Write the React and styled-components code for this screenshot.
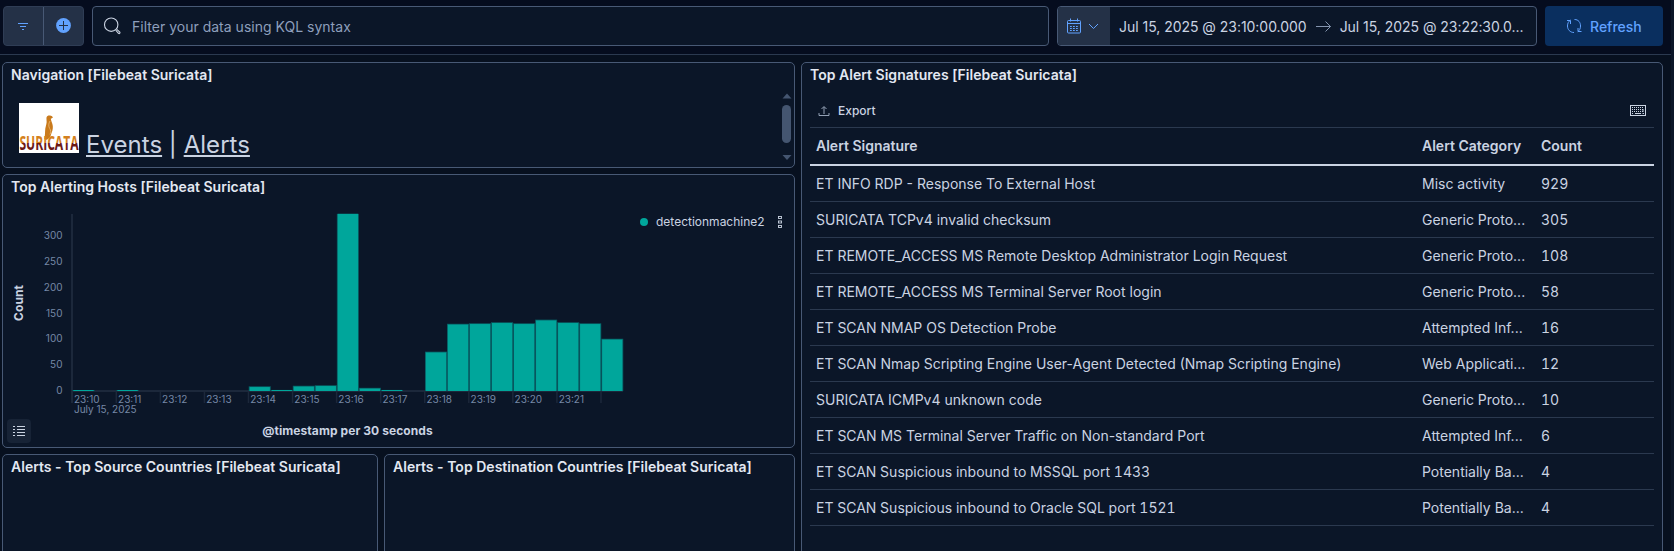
import React from "react";
import styled, { createGlobalStyle, css } from "styled-components";

const c = {
  body: "#07101f",
  panel: "#0b1628",
  border: "#485975",
  line: "#2b394f",
  text: "#cad3e2",
  title: "#e3e8f2",
  subdued: "#8e9fbc",
  axis: "#7688a6",
  primary: "#61a2ff",
  shade: "#243147",
  teal: "#00a69b",
};

const Global = createGlobalStyle`
  html, body { margin: 0; height: 100%; background: ${c.panel}; overflow: hidden; }
  #root { height: 100%; }
  * { box-sizing: border-box; }
  body { font-family: Inter, "Liberation Sans", sans-serif; font-size: 14px; color: ${c.text}; }
  svg { display: block; flex: none; }
`;

const Page = styled.div`
  width: 1671px;
  height: 551px;
  overflow: hidden;
  background: ${c.body};
  display: flex;
  flex-direction: column;
`;

const TopBar = styled.header`
  height: 55px;
  flex: none;
  display: flex;
  gap: 8px;
  padding: 6px 8px 8px 3px;
  border-bottom: 1px solid ${c.line};
  background: #050c1e;
`;

const ButtonGroup = styled.div`
  display: flex;
  width: 81px;
  height: 40px;
  background: ${c.shade};
  border: 1px solid #2f3d55;
  border-radius: 4px;
`;

const GroupButton = styled.button`
  flex: 1;
  padding: 0 1px 0 0;
  border: 0;
  border-left: ${(p) => (p.$divided ? `1px solid ${c.border}` : "0")};
  background: none;
  display: flex;
  align-items: center;
  justify-content: center;
`;

const field = css`
  height: 40px;
  display: flex;
  align-items: center;
  background: ${c.panel};
  border: 1px solid ${c.border};
  border-radius: 4px;
  overflow: hidden;
`;

const SearchField = styled.div`
  ${field}
  width: 957px;
  padding-left: 10px;
  gap: 11px;
  color: ${c.subdued};
`;

const Range = styled.div`
  ${field}
  width: 480px;
  white-space: nowrap;
`;

const QuickSelect = styled.div`
  width: 52px;
  height: 100%;
  background: ${c.shade};
  display: flex;
  align-items: center;
  gap: 7px;
  padding-left: 8px;
`;

const FieldText = styled.span`
  margin-left: ${(p) => p.$gap || 0}px;
  letter-spacing: ${(p) => p.$track || 0}px;
  padding-top: 1px;
`;

const Arrow = styled.span`
  margin-left: 9px;
`;

const Refresh = styled.button`
  width: 118px;
  height: 40px;
  border: 0;
  border-radius: 4px;
  background: #0a2f5f;
  color: ${c.primary};
  font: 500 14px Inter, sans-serif;
  display: flex;
  align-items: center;
  padding: 0 0 0 21px;
  gap: 7px;
`;

const Dashboard = styled.main`
  flex: 1;
  min-height: 0;
  display: flex;
  gap: 6px;
  padding: 7px 8px 0 2px;
`;

const LeftColumn = styled.div`
  width: 793px;
  display: flex;
  flex-direction: column;
  gap: 6px;
`;

const SplitRow = styled.div`
  display: flex;
  gap: 6px;
  height: 120px;
  flex: none;
`;

const Panel = styled.section`
  position: relative;
  flex: ${(p) => (p.$w ? "none" : "1 1 0")};
  width: ${(p) => (p.$w ? `${p.$w}px` : "auto")};
  ${(p) => p.$h && `height: ${p.$h}px; flex: none;`}
  background: ${c.panel};
  border: 1px solid ${c.border};
  border-radius: 5px;
  overflow: hidden;
`;

const Title = styled.h2`
  margin: 0;
  height: 24px;
  padding: 0 8px;
  font-size: 14px;
  line-height: 23px;
  font-weight: 600;
  color: ${c.title};
  letter-spacing: 0.02px;
  white-space: nowrap;
`;

const NavBody = styled.div`
  display: flex;
  justify-content: space-between;
  padding: 6px 2px 0 16px;
`;

const NavLinks = styled.div`
  display: flex;
  align-items: flex-start;
  padding-top: 10px;
  font-size: 24px;
  line-height: 30px;
  white-space: pre;
`;

const LinkText = styled.div`
  padding: 27px 0 0 7px;
  letter-spacing: 0.03px;
`;

const NavLink = styled.a`
  color: ${c.text};
  text-decoration: underline;
  text-decoration-thickness: 2px;
  text-underline-offset: 2px;
`;

const ChartBody = styled.div`
  display: flex;
  height: 248px;
`;

const Legend = styled.div`
  display: flex;
  align-items: center;
  height: 16px;
  margin-top: 14px;
  font-size: 12px;
`;

const LegendDot = styled.span`
  width: 8px;
  height: 8px;
  border-radius: 50%;
  background: ${c.teal};
  margin: 1px 8px 0 0;
`;

const LegendMenu = styled.span`
  margin: 1px 0 0 13px;
`;

const LegendToggle = styled.button`
  position: absolute;
  left: 4px;
  bottom: 4px;
  width: 24px;
  height: 24px;
  padding: 0;
  border: 0;
  border-radius: 4px;
  background: #172336;
  display: flex;
  align-items: center;
  justify-content: center;
`;

const TableArea = styled.div`
  margin: 0 8px;
`;

const Toolbar = styled.div`
  height: 41px;
  border-bottom: 1px solid ${c.line};
  display: flex;
  align-items: center;
  justify-content: space-between;
  padding: 7px 8px 0 8px;
`;

const Export = styled.div`
  display: flex;
  align-items: center;
  gap: 8px;
  font-size: 12px;
  font-weight: 500;
`;

const Row = styled.div`
  display: grid;
  grid-template-columns: 606px 119px 1fr;
  height: ${(p) => (p.$head ? 38 : 36)}px;
  align-items: center;
  font-weight: ${(p) => (p.$head ? 600 : 400)};
  border-bottom: ${(p) => (p.$head ? `2px solid ${c.text}` : `1px solid ${c.line}`)};
`;

const Cell = styled.div`
  padding: 0 6px ${(p) => (p.$head ? 1 : 0)}px;
  white-space: nowrap;
  overflow: hidden;
  font-variant-numeric: ${(p) => (p.$tabular ? "tabular-nums" : "normal")};
`;

const rows = [
  ["ET INFO RDP - Response To External Host", "Misc activity", 929],
  ["SURICATA TCPv4 invalid checksum", "Generic Proto...", 305],
  ["ET REMOTE_ACCESS MS Remote Desktop Administrator Login Request", "Generic Proto...", 108],
  ["ET REMOTE_ACCESS MS Terminal Server Root login", "Generic Proto...", 58],
  ["ET SCAN NMAP OS Detection Probe", "Attempted Inf...", 16],
  ["ET SCAN Nmap Scripting Engine User-Agent Detected (Nmap Scripting Engine)", "Web Applicati...", 12],
  ["SURICATA ICMPv4 unknown code", "Generic Proto...", 10],
  ["ET SCAN MS Terminal Server Traffic on Non-standard Port", "Attempted Inf...", 6],
  ["ET SCAN Suspicious inbound to MSSQL port 1433", "Potentially Ba...", 4],
  ["ET SCAN Suspicious inbound to Oracle SQL port 1521", "Potentially Ba...", 4],
];

const counts = [1.5, 0, 1.5, 0, 0, 0, 0, 0, 8, 2, 9, 10, 343, 5, 2, 0, 75, 129, 130, 132, 130, 137, 132, 130, 100];

function HostsChart() {
  const left = 69.5;
  const base = 192;
  const step = 22.03;
  return (
    <svg width="637" height="248" fontFamily="Inter, sans-serif">
      <rect x="68" y="15" width="2" height="189" fill="#1c283b" />
      <rect x="68" y="191" width="552" height="2" fill="#1c283b" />
      {[0, 50, 100, 150, 200, 250, 300].map((v) => (
        <text key={v} x="59.5" y={195 - v * 0.5165} textAnchor="end" fontSize="10" fill={c.axis}>{v}</text>
      ))}
      {Array.from({ length: 13 }, (_, i) => (
        <g key={i}>
          <rect x={left - 1 + i * step * 2} y="192" width="1.5" height="12" fill="#1c283b" />
          {i < 12 && (
            <text x={left + 1.5 + i * step * 2} y="204" fontSize="10" fill={c.axis}>{`23:${10 + i}`}</text>
          )}
        </g>
      ))}
      <text x="71" y="214" fontSize="10" fill={c.axis}>July 15, 2025</text>
      {counts.map((n, i) => {
        const h = Math.max(1, n * 0.5165);
        const capped = n > 3 && n < 300;
        const full = capped ? h + 0.6 : h;
        const cap = capped ? 0.8 : 0;
        return n > 0 && (
          <g key={i}>
            <rect x={left + i * step} y={base - full} width={step} height={full} fill="#075f65" />
            <rect x={left + 0.9 + i * step} y={base - full + cap} width={step - 1.8} height={full - cap} fill={c.teal} />
          </g>
        );
      })}
      <text transform="translate(19.8 104) rotate(-90)" textAnchor="middle" fontSize="12" fontWeight="700" letterSpacing="0.05" fill={c.text}>Count</text>
      <text x="344.5" y="236" textAnchor="middle" fontSize="12" fontWeight="700" letterSpacing="0.08" fill={c.text}>@timestamp per 30 seconds</text>
    </svg>
  );
}

const LogoSvg = styled.svg`
  overflow: visible;
`;

function SuricataLogo() {
  return (
    <LogoSvg width="60" height="50" viewBox="0 0 60 50">
      <defs>
        <linearGradient id="word" gradientUnits="userSpaceOnUse" x1="0" y1="-15" x2="0" y2="0">
          <stop offset="0.5" stopColor="#d4801d" />
          <stop offset="0.56" stopColor="#6b1a14" />
        </linearGradient>
      </defs>
      <rect width="60" height="50" fill="#fff" />
      <path d="M27.500 14.500c.6-1.700 2-2.200 3.500-1.900 1.200.2 2.200.9 3 1.600-.7.9-1.500 1.300-2.200 1.500.3 2.300 1.700 4.500 2 7.200.4 3.300-.9 5.700-1.600 8.100-.6 2.200-1.700 4.400-4.200 5.800-1.200-.2-1.800-.3-2.700-.8.5-1.800.7-4.700.8-8 .1-3.500 1.200-6 1.500-8.500.2-1.700-.3-3.200-.1-5z" fill="#c97a1c" />
      <path d="M31 18c-1.600 2.500-1.600 5.500-.3 7.500 1.300 2 1.300 3.500.3 6" fill="none" stroke="#e9b36d" strokeWidth="0.9" />
      <text transform="translate(0.4 47) scale(0.58 1)" fontFamily="Open Sans, sans-serif" fontWeight="700" fontSize="20" textLength="102" lengthAdjust="spacingAndGlyphs" fill="url(#word)">SURICATA</text>
    </LogoSvg>
  );
}

const Scrollbar = () => (
  <svg width="11" height="74" fill="#445570">
    <path d="M1.500 5.500 6 .5l4.500 5z" />
    <rect x="1" y="12" width="9" height="38" rx="4.500" />
    <path d="M1.500 62h9L6 67z" />
  </svg>
);

const FilterIcon = () => (
  <svg width="16" height="16" stroke={c.primary}><path d="M3 5.500h10M5 8.500h6M7 11.500h2" /></svg>
);
const PlusIcon = () => (
  <svg width="16" height="16"><circle cx="8.500" cy="7.500" r="7.400" fill={c.primary} /><path d="M8.500 3v9M4 7.500h9" stroke={c.shade} /></svg>
);
const SearchIcon = () => (
  <svg width="18" height="18" fill="none" stroke={c.text} strokeWidth="1.100">
    <circle cx="8.200" cy="7.700" r="6.700" /><path d="m12.700 13.200 2.700 3.100c1 .7 2-.2 1.400-1.200l-3-2.700" />
  </svg>
);
const CalendarIcon = () => (
  <svg width="15" height="17" fill="none" stroke={c.primary}>
    <rect x="1.500" y="2.500" width="13" height="12.500" rx="1" /><path d="M1.500 5.500h13M4.500.5v3M11.500.5v3" />
    <path d="M4 8.500h8.500M4 10.500h8.500M4 12.500h8.500" strokeDasharray="1.800 1.200" />
  </svg>
);
const ChevronIcon = () => (
  <svg width="11" height="7" fill="none" stroke={c.primary}><path d="m1 1 4.500 4.500L10 1" /></svg>
);
const ArrowIcon = () => (
  <svg width="16" height="14" fill="none" stroke="#8494ae"><path d="M0 7.500h14.500M9.500 2.500l5 5-5 5" /></svg>
);
const RefreshIcon = () => (
  <svg width="17" height="18" fill="none" stroke={c.primary}>
    <path d="M8 15.500C4 15.500 1.500 12.500 1.500 9c0-2.700 1-4.500 3-6M1 3.500h3.500V7M8.500 2.500C12.500 2.500 14.500 5.500 14.500 9c0 2.500-1 4.500-2.700 5.800M15.500 14.500H12V11" />
  </svg>
);
const ExportIcon = () => (
  <svg width="12" height="12" fill="none" stroke="#a3b0c5"><path d="M1 8v2.500h10V8M6 9V2M3.500 4 6 1.500 8.500 4" strokeWidth="0.9" /></svg>
);
const KeyboardIcon = () => (
  <svg width="16" height="11" fill="none" stroke={c.text}>
    <rect x="0.500" y="0.500" width="15" height="10" /><path d="M2 2.500h12M2 4.500h12M2 6.500h12" strokeDasharray="1 1" /><path d="M2 8.500h1M5 8.500h6M12.500 8.500h1.500M13 4v3" />
  </svg>
);
const DotsIcon = () => (
  <svg width="4" height="12" fill="none" stroke={c.text} strokeWidth="0.9"><rect x=".5" y=".5" width="3" height="2" /><rect x=".5" y="5" width="3" height="2" /><rect x=".5" y="9.500" width="3" height="2" /></svg>
);
const ListIcon = () => (
  <svg width="12" height="12" stroke={c.text}><path d="M0 1.500h2M4 1.500h8M0 4.500h2M4 4.500h8M0 7.500h2M4 7.500h8M0 10.500h2M4 10.500h8" /></svg>
);

export default function App() {
  return (
    <>
      <Global />
      <Page>
        <TopBar>
          <ButtonGroup>
            <GroupButton><FilterIcon /></GroupButton>
            <GroupButton $divided><PlusIcon /></GroupButton>
          </ButtonGroup>
          <SearchField><SearchIcon /><FieldText $track={0.01}>Filter your data using KQL syntax</FieldText></SearchField>
          <Range>
            <QuickSelect><CalendarIcon /><ChevronIcon /></QuickSelect>
            <FieldText $gap={9} $track={-0.03}>Jul 15, 2025 @ 23:10:00.000</FieldText>
            <Arrow><ArrowIcon /></Arrow>
            <FieldText $gap={8} $track={-0.04}>Jul 15, 2025 @ 23:22:30.0...</FieldText>
          </Range>
          <Refresh><RefreshIcon />Refresh</Refresh>
        </TopBar>
        <Dashboard>
          <LeftColumn>
            <Panel $h={106}>
              <Title>Navigation [Filebeat Suricata]</Title>
              <NavBody>
                <NavLinks>
                  <SuricataLogo />
                  <LinkText><NavLink>Events</NavLink> | <NavLink>Alerts</NavLink></LinkText>
                </NavLinks>
                <Scrollbar />
              </NavBody>
            </Panel>
            <Panel $h={274}>
              <Title>Top Alerting Hosts [Filebeat Suricata]</Title>
              <ChartBody>
                <HostsChart />
                <Legend>
                  <LegendDot />detectionmachine2<LegendMenu><DotsIcon /></LegendMenu>
                </Legend>
              </ChartBody>
              <LegendToggle><ListIcon /></LegendToggle>
            </Panel>
            <SplitRow>
              <Panel $w={376}><Title>Alerts - Top Source Countries [Filebeat Suricata]</Title></Panel>
              <Panel><Title>Alerts - Top Destination Countries [Filebeat Suricata]</Title></Panel>
            </SplitRow>
          </LeftColumn>
          <Panel $w={862} $h={520}>
            <Title>Top Alert Signatures [Filebeat Suricata]</Title>
            <TableArea>
              <Toolbar><Export><ExportIcon />Export</Export><KeyboardIcon /></Toolbar>
              <Row $head><Cell $head>Alert Signature</Cell><Cell $head>Alert Category</Cell><Cell $head>Count</Cell></Row>
              {rows.map(([sig, cat, n]) => (
                <Row key={sig}><Cell $tabular={/\d$/.test(sig)}>{sig}</Cell><Cell>{cat}</Cell><Cell $tabular>{n}</Cell></Row>
              ))}
            </TableArea>
          </Panel>
        </Dashboard>
      </Page>
    </>
  );
}
